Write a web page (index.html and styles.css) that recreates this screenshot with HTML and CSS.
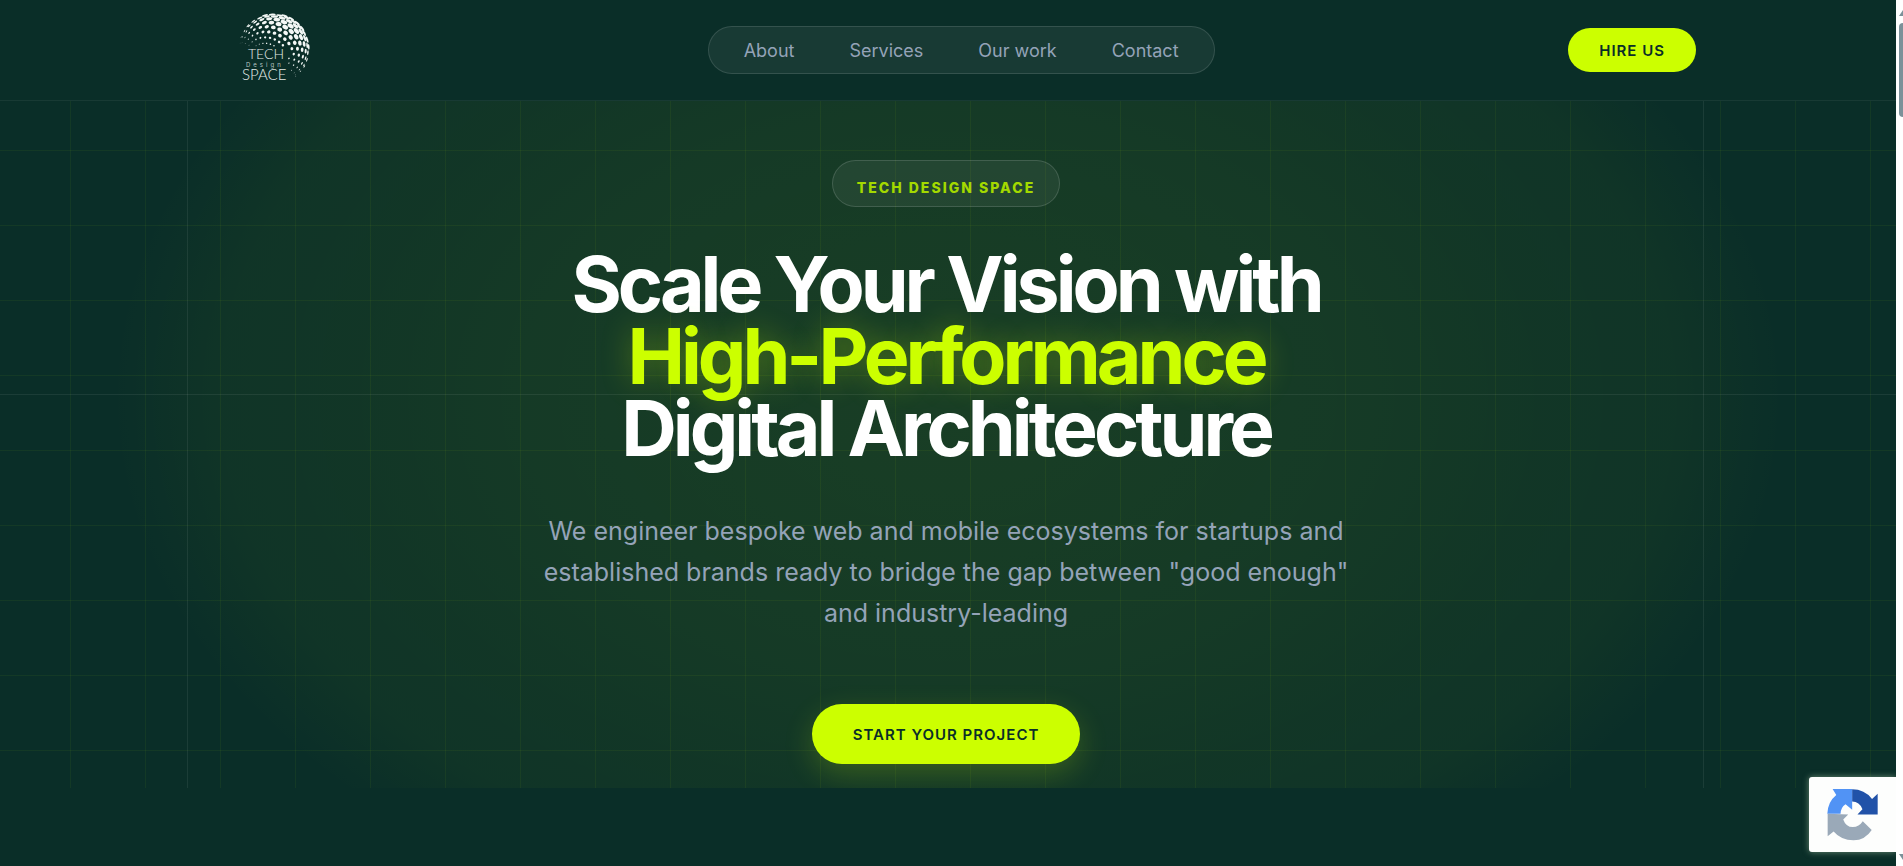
FILE: index.html
```html
<!DOCTYPE html>
<html lang="en">
<head>
    <meta charset="UTF-8">
    <meta name="viewport" content="width=device-width, initial-scale=1.0">
    <title>Tech Design Space</title>
    <link rel="stylesheet" href="styles.css">
</head>
<body>
    <div class="page">
        <header class="header">
            <div class="header-inner">
                <a href="#" class="logo" aria-label="Tech Design Space">
                    <svg width="76" height="76" viewBox="0 0 76 76">
                        <g id="globe" fill="#f4f8f6"></g>
                        <text x="11" y="47" class="logo-main" font-size="14">TECH</text>
                        <text x="9" y="55" class="logo-small" font-size="6">Design</text>
                        <text x="5" y="68" class="logo-main" font-size="15">SPACE</text>
                    </svg>
                </a>
                <nav class="nav">
                    <a href="#about">About</a>
                    <a href="#services">Services</a>
                    <a href="#work">Our work</a>
                    <a href="#contact">Contact</a>
                </nav>
                <button type="button" class="btn btn-small">HIRE US</button>
            </div>
        </header>

        <main class="hero">
            <div class="badge">TECH DESIGN SPACE</div>
            <h1>Scale Your Vision with<br><span class="highlight">High-Performance</span><br>Digital Architecture</h1>
            <p class="lead">We engineer bespoke web and mobile ecosystems for startups and established brands ready to bridge the gap between "good enough" and industry-leading</p>
            <button type="button" class="btn btn-large">START YOUR PROJECT</button>
        </main>
    </div>

    <div class="recaptcha">
        <svg width="53" height="53" viewBox="138 114 158 160">
            <path fill="#5193f5" d="M157 117H216V180L196 163Q181 173 181 192H141Q142 156 168 135Z"/>
            <path fill="#2152a8" d="M216 118Q253 118 276 147L293 131V194H232L247 178Q238 155 216 155Z"/>
            <path fill="#9aa9b8" d="M142 192L204 194L189 209Q197 232 218 232Q237 231 248 214L275 241Q255 272 220 272Q182 271 160 245L142 260Z"/>
        </svg>
    </div>

    <div class="scrollbar">
        <div class="arrow arrow-up"></div>
        <div class="thumb"></div>
        <div class="arrow arrow-down"></div>
    </div>

    <script src="script.js"></script>
</body>
</html>
```
FILE: styles.css
```css
:root {
    --bg: #0a2e28;
    --lime: #ccff00;
    --muted: #94a3b8;
    --glass: rgba(255, 255, 255, 0.06);
    --line-lime: rgba(204, 255, 0, 0.05);
    --line-white: rgba(255, 255, 255, 0.07);
}

* {
    margin: 0;
    padding: 0;
    box-sizing: border-box;
}

body {
    background: var(--bg);
    color: white;
    font-family: Inter, 'Open Sans', sans-serif;
    min-height: 100vh;
    overflow: hidden;
}

.page {
    margin-right: 7px;
}

/* Header */
.header {
    padding: 0 28px 0 24px;
    border-bottom: 1px solid rgba(255, 255, 255, 0.06);
}

.header-inner {
    max-width: 1500px;
    height: 100px;
    margin: 0 auto;
    display: flex;
    align-items: center;
    justify-content: space-between;
}

.logo {
    width: 158px;
    display: flex;
    justify-content: center;
}

.logo-main {
    font-family: Lato, sans-serif;
    font-weight: 300;
    fill: #e4ecea;
}

.logo-small {
    font-family: Inter, sans-serif;
    letter-spacing: 3px;
    fill: #b5c4c4;
}

.nav {
    display: flex;
    gap: 55px;
    padding: 13px 35px 11px;
    background: var(--glass);
    border: 1px solid rgba(255, 255, 255, 0.12);
    border-radius: 24px;
}

.nav a {
    color: var(--muted);
    font-size: 18px;
    line-height: 22px;
    text-decoration: none;
}

.btn {
    background: var(--lime);
    color: var(--bg);
    border: none;
    font-family: inherit;
    font-size: 15px;
    font-weight: 600;
    letter-spacing: 1px;
    cursor: pointer;
}

.btn-small {
    height: 44px;
    padding: 0 31px;
    border-radius: 22px;
}

.btn-large {
    height: 60px;
    padding: 0 41px;
    border-radius: 30px;
    box-shadow: 0 10px 30px rgba(204, 255, 0, 0.2);
}

/* Hero */
.hero {
    display: flex;
    flex-direction: column;
    align-items: center;
    padding: 59px 28px 24px 24px;
    text-align: center;
    overflow: hidden;
    background:
        linear-gradient(var(--line-white), var(--line-white)) 187px 0 / 1px 100% no-repeat,
        linear-gradient(var(--line-white), var(--line-white)) calc(100% - 192px) 0 / 1px 100% no-repeat,
        linear-gradient(var(--line-white), var(--line-white)) 0 293px / 100% 1px no-repeat,
        linear-gradient(90deg, var(--line-lime) 1px, transparent 1px) 70px 0 / 75px 75px,
        linear-gradient(var(--line-lime) 1px, transparent 1px) 0 49px / 75px 75px,
        radial-gradient(48% 90% at 50% 43%,
            rgba(204, 255, 0, 0.08),
            rgba(204, 255, 0, 0.06) 45%,
            rgba(204, 255, 0, 0.04) 66%,
            rgba(204, 255, 0, 0.03) 80%,
            rgba(204, 255, 0, 0) 92%);
}

.badge {
    padding: 17px 24px 9px;
    background: var(--glass);
    border: 1px solid rgba(255, 255, 255, 0.14);
    border-radius: 24px;
    color: #a3d900;
    font-size: 14px;
    font-weight: 800;
    line-height: 19px;
    letter-spacing: 2px;
}

h1 {
    margin: 41px 0 47px;
    font-size: 77px;
    font-weight: 700;
    line-height: 72px;
    letter-spacing: -4px;
}

.highlight {
    color: var(--lime);
    text-shadow: 0 0 30px rgba(204, 255, 0, 0.3);
}

.lead {
    max-width: 820px;
    margin-bottom: 70px;
    color: var(--muted);
    font-size: 25px;
    line-height: 41px;
}

/* reCAPTCHA badge */
.recaptcha {
    position: fixed;
    right: 7px;
    bottom: 14px;
    width: 87px;
    height: 75px;
    padding: 11px 17px;
    background: #fdfefd;
    border-radius: 3px 0 0 3px;
    box-shadow: 0 0 6px rgba(150, 180, 150, 0.7);
}

/* Scrollbar */
.scrollbar {
    position: fixed;
    top: 0;
    right: 0;
    bottom: 0;
    width: 7px;
    padding: 10px 0 6px 3px;
    display: flex;
    flex-direction: column;
    background: white;
    overflow: hidden;
}

.thumb {
    width: 8px;
    height: 94px;
    margin: 7px 0 auto;
    background: #7b9199;
    border-radius: 4px;
}

.arrow {
    width: 8px;
    height: 6px;
    background: #7b9199;
}

.arrow-up {
    clip-path: polygon(50% 0, 100% 100%, 0 100%);
}

.arrow-down {
    clip-path: polygon(0 0, 100% 0, 50% 100%);
}
```
FILE: script.js
```js
// Halftone globe of the logo: rings of dots round a pole, shrinking away from the light
const globe = document.getElementById('globe');
const R = 35;
const C = 37;

function normalize(v) {
    const len = Math.hypot(...v);
    return v.map(n => n / len);
}

function cross(a, b) {
    return [a[1] * b[2] - a[2] * b[1], a[2] * b[0] - a[0] * b[2], a[0] * b[1] - a[1] * b[0]];
}

const pole = normalize([-0.25, 0.35, 0.9]);
const u = normalize(cross(pole, [0, 1, 0]));
const v = cross(pole, u);
const count = 28;

for (let ring = 3; ring < 13; ring++) {
    const theta = ring * 10 * Math.PI / 180;
    for (let i = 0; i < count; i++) {
        const phi = (i + (ring % 2) / 2) * 2 * Math.PI / count;
        const n = [0, 1, 2].map(k =>
            pole[k] * Math.cos(theta) + (u[k] * Math.cos(phi) + v[k] * Math.sin(phi)) * Math.sin(theta));
        const light = n[0] * 0.5 - n[1] * 0.8;
        if (n[2] < 0.04) continue;
        // keep the area of the lettering clear
        if (n[0] < 0.4 && n[1] > -0.05 && n[0] > -0.85) continue;
        if (n[0] < 0 && n[1] > 0.3) continue;

        const size = R * 0.1 * Math.min(1, 0.4 + light * 0.8) * Math.sin(theta);
        if (size < 0.3) continue;
        const dot = document.createElementNS('http://www.w3.org/2000/svg', 'ellipse');
        const angle = Math.atan2(n[1], n[0]) * 180 / Math.PI;
        dot.setAttribute('rx', size * Math.max(n[2], 0.3));
        dot.setAttribute('ry', size);
        dot.setAttribute('transform', `translate(${C + n[0] * R} ${C + n[1] * R}) rotate(${angle})`);
        globe.appendChild(dot);
    }
}
```
